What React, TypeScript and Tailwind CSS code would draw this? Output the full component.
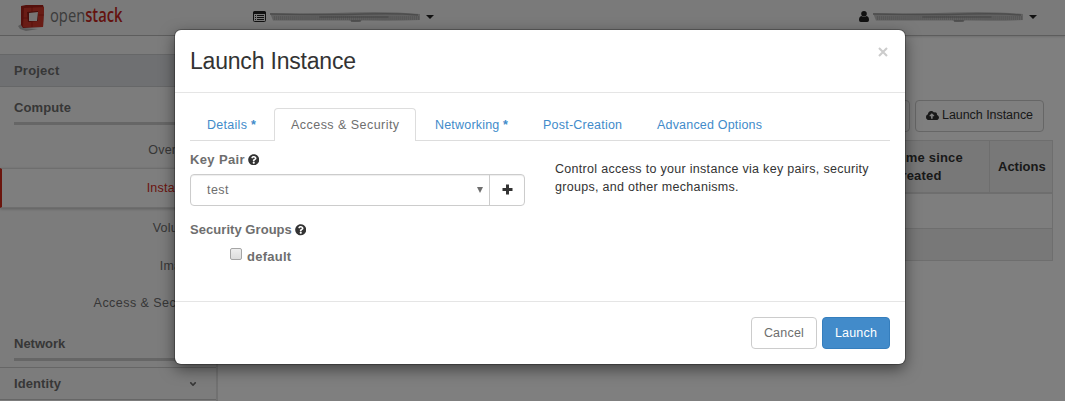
import React from "react";
import { FaCloudUploadAlt, FaQuestionCircle, FaAngleDown } from "react-icons/fa";

function Logo() {
  return (
    <svg className="h-[30px] w-[120px] shrink-0" viewBox="0 0 120 30">
      <path d="M0 23 L5 20 L5 25 L20 26 L8 28 L2 26Z" fill="#555" opacity=".4" />
      <path d="M3 3 L8 2 L25 2 L26 5 L25 24 L5 25 L3 22Z" fill="#a82018" />
      <path d="M6 5 L26 4 L25 24 L5 24Z" fill="#d2382a" />
      <path d="M9 9 L20 8 L20 18 L10 19Z" fill="#8c1c14" />
      <path d="M11 10 L20 9 L19 18 L11 18Z" fill="#efebe8" />
      <path d="M5 15h5M20 12h6M14 4v5M14 19v5" stroke="#a3120e" strokeWidth=".6" />
      <text x="32" y="19" fontFamily="'Open Sans', sans-serif" fontSize="19" textLength="72.5" lengthAdjust="spacingAndGlyphs" fill="#777">
        open<tspan fontWeight="600" fill="#c9271d">stack</tspan>
      </text>
    </svg>
  );
}

function Smudge({ width }: { width: number }) {
  return (
    <svg width={width} height="12" viewBox="0 0 154 12" preserveAspectRatio="none" className="mx-1 shrink-0 blur-[0.6px]">
      <path d="M0 2 Q40 3 80 1.5 T152 3 L152 9 Q130 10 94 9.5 Q86 12 80 9.5 L3 9.5Z" fill="#c2c2c2" />
      <path d="M0 3 Q60 4 95 3 T150 4" stroke="#999" strokeWidth="1.5" fill="none" />
      <path d="M4 7H151" stroke="#8c8c8c" strokeWidth="4" strokeDasharray="1 1" opacity=".4" />
      <path d="M50 6 H120" stroke="#8a8a8a" strokeWidth="1" fill="none" />
      <path d="M82 10 H92" stroke="#777" strokeWidth="1" />
    </svg>
  );
}

function Caret() {
  return <svg width="8" height="4" viewBox="0 0 8 4"><path d="M0 0H8L4 4Z" fill="#222" /></svg>;
}

function ListIcon() {
  return (
    <svg width="13" height="11" viewBox="0 0 13 11" className="shrink-0">
      <rect x=".5" y="1" width="12" height="9.5" rx="1" fill="none" stroke="#222" />
      <path d="M0 1.5Q0 0 1.5 0H11.5Q13 0 13 1.5V3H0Z" fill="#222" />
      <path d="M2 4.5h1M4 4.5h7M2 6.5h1M4 6.5h7M2 8.5h1M4 8.5h7" stroke="#222" />
    </svg>
  );
}

function UserIcon() {
  return (
    <svg width="10" height="11" viewBox="0 0 10 11" className="shrink-0">
      <circle cx="5" cy="2.8" r="2.8" fill="#222" />
      <path d="M2.4 5Q0 5.4 0 9Q0 11 1.8 11H8.2Q10 11 10 9Q10 5.4 7.6 5Q5 7.2 2.4 5Z" fill="#222" />
    </svg>
  );
}

const items = ["Overview", "Instances", "Volumes", "Images", "Access & Security"];

function Sidebar() {
  return (
    <aside className="h-[366px] w-[218px] shrink-0 border-r-2 border-[#e2e2e2] bg-[#f9f9f9] pt-[18px] font-bold text-[#6e6e6e]">
      <div className="h-[33px] border-y border-[#cdcfd1] bg-[#dee1e5] pl-[14px] leading-[32px] tracking-[0.2px]">Project</div>
      <div className="ml-[14px] h-[38px] border-b-[3px] border-[#ccc] pt-[11px] leading-[20px] tracking-[0.1px]">Compute</div>
      <ul className="mt-[5px] text-[12.5px] font-normal tracking-[0.2px]">
        {items.map((t) => (
          <li
            key={t}
            className={
              t === "Instances"
                ? "relative h-[40px] border-y border-l-2 border-[#ddd] border-l-[#d62a1b] bg-[#fdfdfd] pr-[14px] text-right leading-[39px] text-[#d62a1b] shadow-[0_1px_3px_#bbb]"
                : t.startsWith("Access")
                  ? "h-[38px] pr-[14px] text-right leading-[39px] tracking-[0.45px]"
                  : "h-[38px] pr-[14px] text-right leading-[40px]"
            }
          >
            {t}
          </li>
        ))}
      </ul>
      <div className="ml-[14px] mt-[1px] h-[38px] border-b-[3px] border-[#ccc] pt-[11px] leading-[20px]">Network</div>
      <div className="mt-[6px] flex h-[33px] items-center justify-between border-y border-[#ccc] pl-[14px] pr-[18px] tracking-[0.1px]">
        Identity
        <FaAngleDown className="size-[10px]" />
      </div>
    </aside>
  );
}

function Background() {
  return (
    <div className="h-[401px] overflow-hidden bg-white">
      <header className="flex h-[36px] items-start border-b border-[#bbb] bg-[#f5f5f5] pl-[18px] shadow-[0_1px_2px_#ddd]">
        <div className="flex w-[235px] pt-[3px]"><Logo /></div>
        <div className="flex h-[33px] w-[606px] items-center">
          <ListIcon />
          <Smudge width={152} />
          <Caret />
        </div>
        <div className="flex h-[33px] items-center">
          <UserIcon />
          <Smudge width={152} />
          <Caret />
        </div>
      </header>
      <div className="flex">
        <Sidebar />
        <main className="flex flex-1 flex-col items-end text-[#333]">
          <div className="mr-[21px] mt-[64px] flex h-[32px] gap-[5px]">
            <div className="w-[90px] rounded-[4px] border border-[#ccc]" />
            <div className="flex w-[129px] items-center gap-[3px] whitespace-nowrap rounded-[4px] border border-[#ccc] pb-[2px] pl-[10px] text-[12.5px] tracking-[-0.05px]">
              <FaCloudUploadAlt className="size-[13px]" />
              Launch Instance
            </div>
          </div>
          <div className="mr-[12px] mt-[8px] w-[800px] border border-[#ddd] font-bold">
            <div className="flex h-[53px] justify-end border-b-2 border-[#ddd] bg-[#f1f1f1]">
              <div className="w-[100px] border-r border-[#ddd] pl-[4px] pt-[8px] leading-[18px] tracking-[0.2px]">Time since<br />created</div>
              <div className="w-[62px] pl-[8px] leading-[52px]">Actions</div>
            </div>
            <div className="h-[35px] border-b border-[#ddd] bg-[#fdfdfd]" />
            <div className="h-[31px] bg-[#f1f1f1]" />
          </div>
        </main>
      </div>
    </div>
  );
}

function Modal() {
  return (
    <section className="absolute left-[175px] top-[30px] h-[334px] w-[730px] rounded-[6px] bg-white text-[12.5px] shadow-[0_5px_15px_rgba(0,0,0,0.5),0_0_0_1px_rgba(0,0,0,0.25)]">
      <div className="flex h-[63px] justify-between border-b border-[#e5e5e5] px-[15px]">
        <h1 className="pt-[15px] text-[23px] leading-[32px] tracking-[-0.2px] text-[#333]">Launch Instance</h1>
        <svg className="mr-[2px] mt-[17px]" width="10" height="10" viewBox="0 0 10 10"><path d="M1 1L9 9M9 1L1 9" stroke="#ccc" strokeWidth="2.1" /></svg>
      </div>
      <nav className="mx-[15px] mt-[15px] flex h-[33px] border-b border-[#ddd] leading-[34px] text-[#428bca]">
        <span className="w-[84px] pl-[17px] tracking-[0.28px]">Details <b>*</b></span>
        <span className="h-[33px] w-[142px] rounded-t-[4px] border border-b-0 border-[#ddd] bg-white pl-[16px] leading-[32px] tracking-[0.46px] text-[#6e6e6e]">Access &amp; Security</span>
        <span className="w-[108px] pl-[19px] tracking-[0.19px]">Networking <b>*</b></span>
        <span className="w-[114px] pl-[19px] tracking-[0.22px]">Post-Creation</span>
        <span className="pl-[19px] tracking-[0.19px]">Advanced Options</span>
      </nav>
      <div className="flex h-[160px] px-[15px]">
        <div className="w-[335px] text-[13px] font-bold text-[#6e6e6e]">
          <div className="flex h-[33px] items-center gap-[3px] pt-[4px] tracking-[0.36px]">Key Pair <FaQuestionCircle className="size-[11.5px] text-[#333]" /></div>
          <div className="flex h-[32px] rounded-[4px] border border-[#ccc] font-normal shadow-[inset_0_1px_1px_#eee]">
            <div className="flex w-[299px] items-center justify-between border-r border-[#ccc] pl-[16px] pr-[6px] text-[12.5px] tracking-[0.45px]">
              test
              <svg width="6" height="6" viewBox="0 0 6 6"><path d="M0 0H6L3 6Z" fill="#6e6e6e" /></svg>
            </div>
            <div className="flex flex-1 items-center justify-center">
              <svg width="11" height="11" viewBox="0 0 11 11" className="mb-[2px]"><path d="M5.5 .5V10.5M.5 5.5H10.5" stroke="#333" strokeWidth="3" /></svg>
            </div>
          </div>
          <div className="mt-[14px] flex h-[20px] items-center gap-[3px] tracking-[0.05px]">Security Groups <FaQuestionCircle className="size-[11.5px] text-[#333]" /></div>
          <div className="flex h-[33px] items-center pl-[40px] tracking-[0.25px]">
            <span className="mb-[5px] mr-[5px] size-[12px] rounded-[2px] border border-[#a5a5a5] bg-gradient-to-b from-[#eee] to-[#ddd]" />
            default
          </div>
        </div>
        <p className="whitespace-nowrap pl-[30px] pt-[19px] leading-[18px] tracking-[0.3px] text-[#333]">
          Control access to your instance via key pairs, security<br />groups, and other mechanisms.
        </p>
      </div>
      <div className="flex h-[63px] justify-end gap-[5px] border-t border-[#e5e5e5] px-[15px] pt-[15px]">
        <button className="h-[32px] w-[66px] rounded-[4px] border border-[#ccc] tracking-[0.22px] text-[#6e6e6e]">Cancel</button>
        <button className="h-[32px] w-[68px] rounded-[4px] border border-[#357ebd] bg-[#428bca] tracking-[0.2px] text-white">Launch</button>
      </div>
    </section>
  );
}

export default function App() {
  return (
    <div className="relative h-[401px] w-[1065px] overflow-hidden font-['Liberation_Sans',Arial,sans-serif] text-[13px]">
      <Background />
      <div className="absolute inset-0 bg-black/50" />
      <Modal />
    </div>
  );
}
